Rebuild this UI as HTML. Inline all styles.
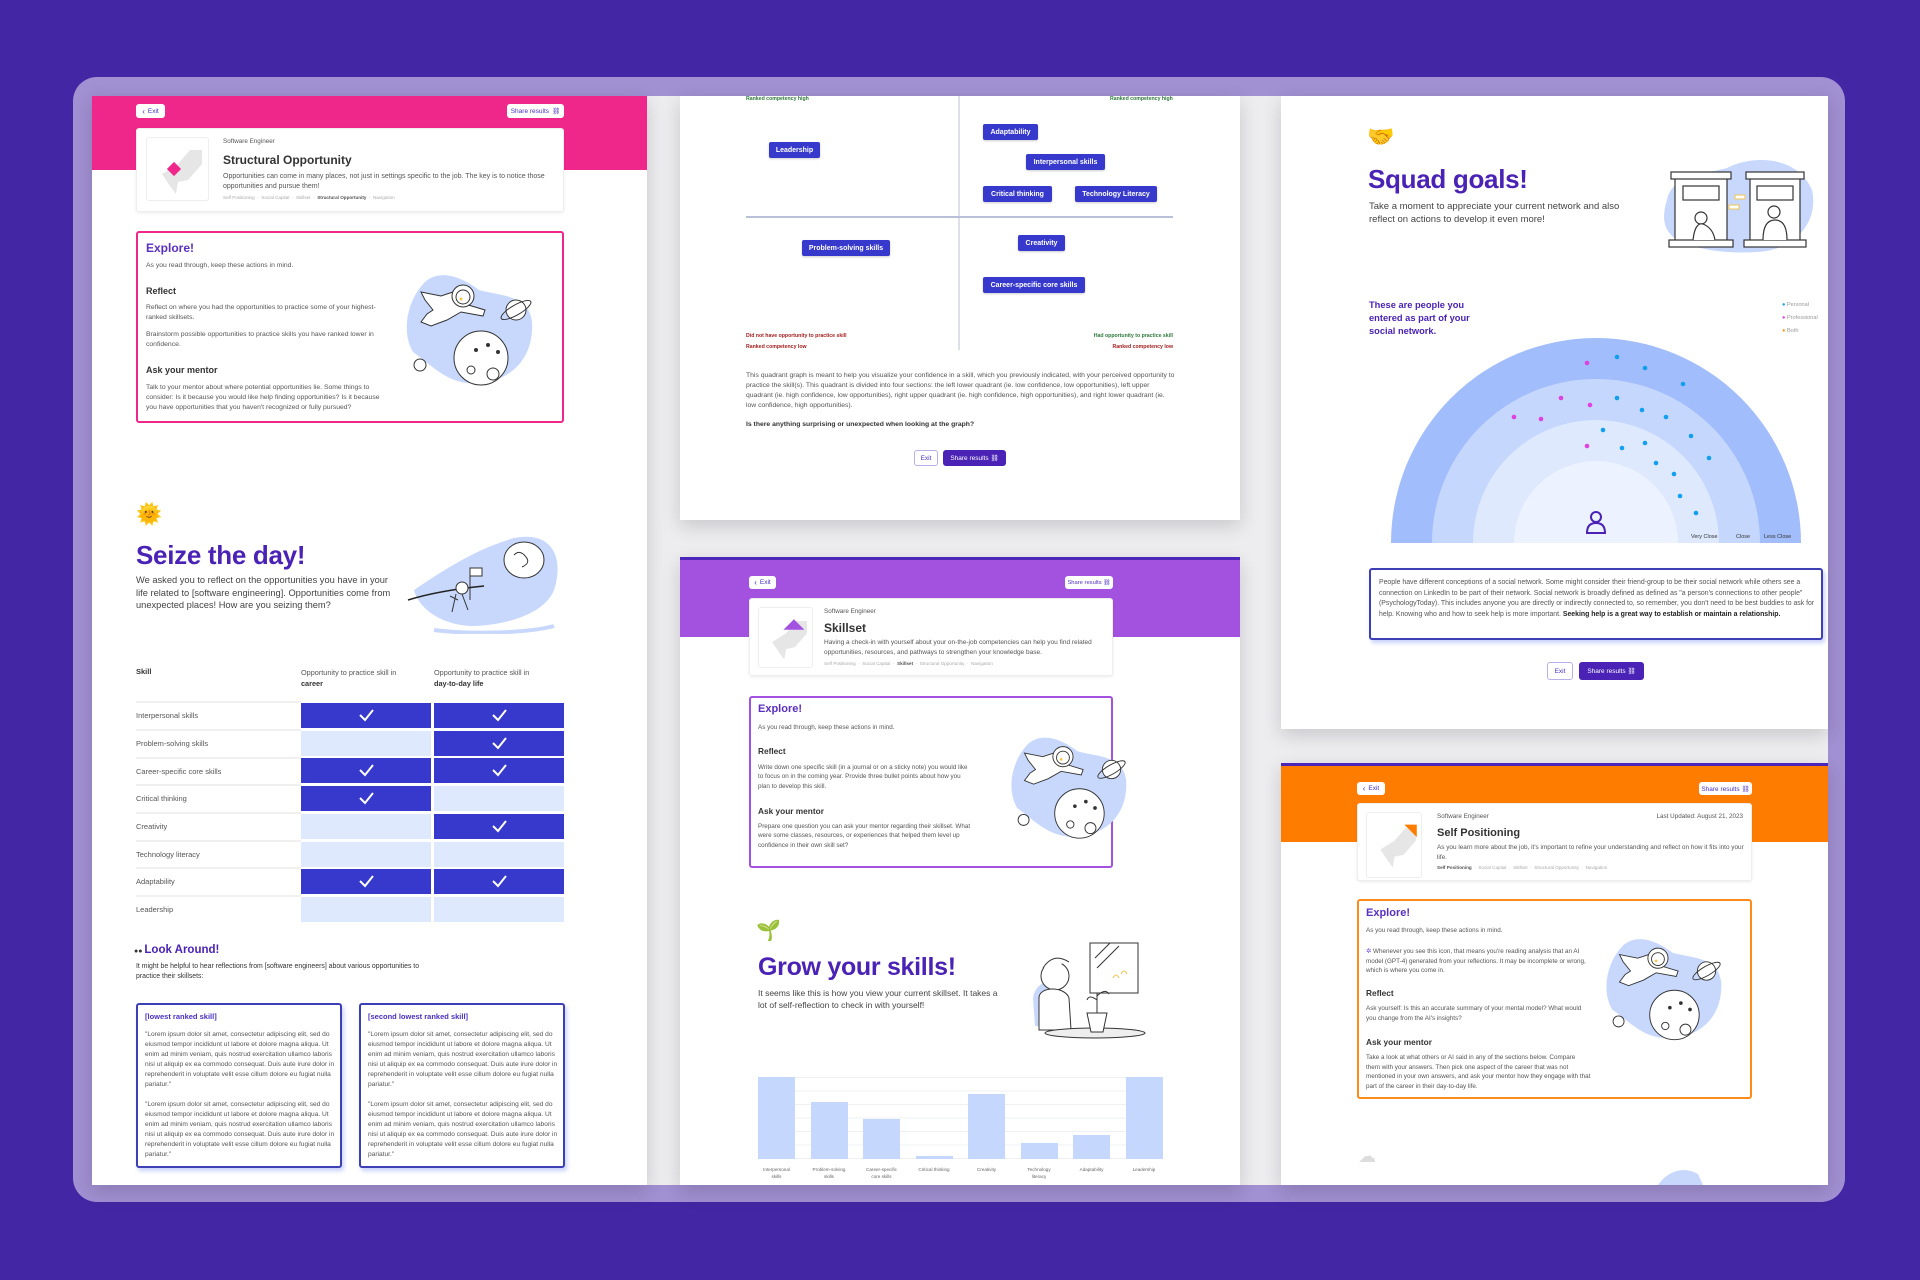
<!DOCTYPE html>
<html><head><meta charset="utf-8">
<style>
*{margin:0;padding:0;box-sizing:border-box}
body{width:1920px;height:1280px;background:#4326a3;font-family:"Liberation Sans",Arial,sans-serif;color:#3a3a3a;position:relative;overflow:hidden}
.a{position:absolute}
.panel{position:absolute;background:#fff;box-shadow:0 6px 18px rgba(0,0,0,.16);overflow:hidden}
.btn{position:absolute;background:#fff;border-radius:3px;color:#4a2fc0;font-size:6.5px;display:flex;align-items:center;justify-content:center;gap:3px;white-space:nowrap}
.card{position:absolute;background:#fff;border-radius:3px;box-shadow:0 1px 3px rgba(0,0,0,.08);border:1px solid #eee}
.thumb{position:absolute;border:1px solid #eee;border-radius:3px;background:#fff}
.se{font-size:6.3px;color:#555}
.ttl{font-size:12px;font-weight:bold;color:#333}
.desc{font-size:7px;color:#555;line-height:9.5px}
.crumb{font-size:4.6px;color:#aaa;white-space:nowrap}
.crumb b{color:#555}
.ex{position:absolute;background:#fff;border:2px solid;border-radius:3px}
.exh{font-size:12px;font-weight:bold;color:#5a2fc2}
.sm{font-size:6.8px;color:#555;line-height:10px}
.h9{font-size:9px;font-weight:bold;color:#333}
.chip{position:absolute;background:#3639cb;color:#fff;font-size:7px;font-weight:bold;border-radius:2px;display:flex;align-items:center;justify-content:center;box-shadow:0 1px 2px rgba(0,0,0,.2)}
.big{font-size:26px;font-weight:bold;color:#4a22b5;letter-spacing:-.3px}
.lbl{font-size:7.5px;color:#555}
.cell{position:absolute;height:25px;width:130px}
.on{background:#3639cb}.off{background:#dfe9fd}
.qc{position:absolute;background:#fff;border:2px solid #3d3fb5;border-radius:3px;box-shadow:2px 3px 4px rgba(120,140,240,.4)}
.lor{font-size:6.6px;color:#555;line-height:10px}
</style></head><body>
<svg width="0" height="0" style="position:absolute">
<defs>
<g id="space">
<path d="M22,12 C38,-2 60,8 76,20 C96,26 126,24 129,52 C131,82 114,110 76,113 C46,116 30,96 10,82 C-2,62 4,30 22,12Z" fill="#c8d8fd"/>
<g fill="#fff" stroke="#333" stroke-width="1">
<path d="M18,22 L38,26 L50,22 L62,34 L82,40 L80,46 L58,42 L44,50 L28,56 L18,52 L24,44 L30,40 L22,30Z"/>
<circle cx="60" cy="26" r="11"/>
<circle cx="60" cy="27" r="7"/>
<circle cx="113" cy="40" r="10"/>
<ellipse cx="113" cy="40" rx="17" ry="5" fill="none" transform="rotate(-30 113 40)"/>
<circle cx="17" cy="95" r="6"/>
<circle cx="78" cy="88" r="27"/>
<circle cx="68" cy="100" r="4" fill="none"/>
<circle cx="90" cy="104" r="6" fill="none"/>
<circle cx="85" cy="75" r="1.5" fill="#333"/>
<circle cx="73" cy="80" r="1.5" fill="#333"/>
<circle cx="95" cy="82" r="1.5" fill="#333"/>
</g>
<circle cx="58" cy="29" r="1.5" fill="#f5c84a"/>
</g>
<g id="logo">
<path d="M12,32 L28,22 L40,8 L52,8 L52,22 L38,38 L28,40 L26,52 L20,44 Z" fill="#e6e6e6"/>
</g>
</defs>
</svg>

<div class="a" style="left:73px;top:77px;width:1772px;height:1125px;background:#a190d2;border-radius:24px"></div>
<div class="a" style="left:92px;top:96px;width:1736px;height:1089px;background:#ededf0"></div>

<!-- LEFT PANEL -->
<div class="panel" style="left:92px;top:96px;width:555px;height:1089px">
 <div class="a" style="left:0;top:0;width:555px;height:74px;background:#f0278a"></div>
</div>
<div class="btn" style="left:136px;top:104px;width:29px;height:14px"><span style="font-size:8px">‹</span> Exit</div>
<div class="btn" style="left:507px;top:104px;width:57px;height:14px">Share results <span>⛓</span></div>
<div class="card" style="left:136px;top:128px;width:428px;height:84px"></div>
<div class="thumb" style="left:146px;top:137px;width:63px;height:64px"><svg width="63" height="64" viewBox="0 0 63 64"><use href="#logo" x="3" y="4"/><rect x="22" y="26" width="10" height="10" fill="#f0278a" transform="rotate(45 27 31)"/></svg></div>
<div class="a se" style="left:223px;top:138px">Software Engineer</div>
<div class="a ttl" style="left:223px;top:153px">Structural Opportunity</div>
<div class="a desc" style="left:223px;top:172px;width:330px">Opportunities can come in many places, not just in settings specific to the job. The key is to notice those opportunities and pursue them!</div>
<div class="a crumb" style="left:223px;top:195px">Self Positioning &nbsp;·&nbsp; Social Capital &nbsp;·&nbsp; Skillset &nbsp;·&nbsp; <b>Structural Opportunity</b> &nbsp;·&nbsp; Navigation</div>

<div class="ex" style="left:136px;top:231px;width:428px;height:192px;border-color:#f0278a"></div>
<div class="a exh" style="left:146px;top:241px">Explore!</div>
<div class="a sm" style="left:146px;top:261px">As you read through, keep these actions in mind.</div>
<div class="a h9" style="left:146px;top:286px">Reflect</div>
<div class="a sm" style="left:146px;top:303px;width:240px">Reflect on where you had the opportunities to practice some of your highest-ranked skillsets.</div>
<div class="a sm" style="left:146px;top:330px;width:240px">Brainstorm possible opportunities to practice skills you have ranked lower in confidence.</div>
<div class="a h9" style="left:146px;top:365px">Ask your mentor</div>
<div class="a sm" style="left:146px;top:383px;width:240px">Talk to your mentor about where potential opportunities lie. Some things to consider: Is it because you would like help finding opportunities? Is it because you have opportunities that you haven't recognized or fully pursued?</div>
<svg class="a" style="left:403px;top:270px" width="131" height="116" viewBox="0 0 131 116"><use href="#space"/></svg>

<div class="a" style="left:136px;top:503px;font-size:21px">🌞</div>
<div class="a big" style="left:136px;top:540px">Seize the day!</div>
<div class="a" style="left:136px;top:574px;width:260px;font-size:9.3px;line-height:12.5px;color:#444">We asked you to reflect on the opportunities you have in your life related to [software engineering]. Opportunities come from unexpected places! How are you seizing them?</div>
<svg class="a" style="left:404px;top:530px" width="156" height="104" viewBox="0 0 156 104">
<path d="M10,60 C40,40 70,20 110,8 C150,0 160,30 150,60 C140,85 100,95 70,96 C40,96 15,80 10,60Z" fill="#c8d8fd"/>
<path d="M4,70 C30,62 60,58 80,56" stroke="#222" stroke-width="1.5" fill="none"/>
<ellipse cx="120" cy="30" rx="20" ry="18" fill="#fff" stroke="#333"/>
<path d="M110,25 q6,-6 12,2 q5,6 -4,10" stroke="#333" fill="none"/>
<circle cx="58" cy="58" r="6" fill="#fff" stroke="#333"/>
<path d="M52,64 l-4,18 M58,64 l6,16 M54,70 l-8,-4" stroke="#333" fill="none"/>
<path d="M66,40 l0,30" stroke="#333"/><rect x="66" y="38" width="12" height="8" fill="#fff" stroke="#333"/>
<path d="M30,100 C60,104 120,104 150,96" stroke="#c8d8fd" stroke-width="4" fill="none"/>
</svg>

<div class="a" style="left:136px;top:667px;font-size:7.5px;font-weight:bold;color:#333">Skill</div>
<div class="a" style="left:301px;top:667px;font-size:7.3px;color:#555;line-height:11px">Opportunity to practice skill in<br><b style="color:#333">career</b></div>
<div class="a" style="left:434px;top:667px;font-size:7.3px;color:#555;line-height:11px">Opportunity to practice skill in<br><b style="color:#333">day-to-day life</b></div>

<div class="a" style="left:136px;top:701px;width:165px;height:2px;background:#f0f0f0"></div>
<div class="a lbl" style="left:136px;top:711px">Interpersonal skills</div>
<div class="cell on" style="left:301px;top:703px"></div><div class="cell on" style="left:434px;top:703px"></div>
<div class="a" style="left:136px;top:729px;width:165px;height:2px;background:#f0f0f0"></div>
<div class="a lbl" style="left:136px;top:739px">Problem-solving skills</div>
<div class="cell off" style="left:301px;top:731px"></div><div class="cell on" style="left:434px;top:731px"></div>
<div class="a" style="left:136px;top:757px;width:165px;height:2px;background:#f0f0f0"></div>
<div class="a lbl" style="left:136px;top:767px">Career-specific core skills</div>
<div class="cell on" style="left:301px;top:758px"></div><div class="cell on" style="left:434px;top:758px"></div>
<div class="a" style="left:136px;top:784px;width:165px;height:2px;background:#f0f0f0"></div>
<div class="a lbl" style="left:136px;top:794px">Critical thinking</div>
<div class="cell on" style="left:301px;top:786px"></div><div class="cell off" style="left:434px;top:786px"></div>
<div class="a" style="left:136px;top:812px;width:165px;height:2px;background:#f0f0f0"></div>
<div class="a lbl" style="left:136px;top:822px">Creativity</div>
<div class="cell off" style="left:301px;top:814px"></div><div class="cell on" style="left:434px;top:814px"></div>
<div class="a" style="left:136px;top:840px;width:165px;height:2px;background:#f0f0f0"></div>
<div class="a lbl" style="left:136px;top:850px">Technology literacy</div>
<div class="cell off" style="left:301px;top:842px"></div><div class="cell off" style="left:434px;top:842px"></div>
<div class="a" style="left:136px;top:867px;width:165px;height:2px;background:#f0f0f0"></div>
<div class="a lbl" style="left:136px;top:877px">Adaptability</div>
<div class="cell on" style="left:301px;top:869px"></div><div class="cell on" style="left:434px;top:869px"></div>
<div class="a" style="left:136px;top:895px;width:165px;height:2px;background:#f0f0f0"></div>
<div class="a lbl" style="left:136px;top:905px">Leadership</div>
<div class="cell off" style="left:301px;top:897px"></div><div class="cell off" style="left:434px;top:897px"></div>
<svg class="a" style="left:301px;top:703px" width="263" height="220">
<g stroke="#fff" stroke-width="2" fill="none">
<polyline points="59,12 64,17 72,7"/><polyline points="192,12 197,17 205,7"/>
<polyline points="192,40 197,45 205,35"/>
<polyline points="59,67 64,72 72,62"/><polyline points="192,67 197,72 205,62"/>
<polyline points="59,95 64,100 72,90"/>
<polyline points="192,123 197,128 205,118"/>
<polyline points="59,178 64,183 72,173"/><polyline points="192,178 197,183 205,173"/>
</g></svg>

<div class="a" style="left:134px;top:944px;font-size:11.5px;font-weight:bold;color:#4a22b5"><span style="font-size:7px;color:#333">●● </span>Look Around!</div>
<div class="a" style="left:136px;top:962px;width:300px;font-size:6.9px;line-height:10px;color:#333">It might be helpful to hear reflections from [software engineers] about various opportunities to practice their skillsets:</div>
<div class="qc" style="left:136px;top:1003px;width:206px;height:165px"></div>
<div class="qc" style="left:359px;top:1003px;width:206px;height:165px"></div>
<div class="a" style="left:145px;top:1012px;font-size:7.5px;font-weight:bold;color:#4a2fc0">[lowest ranked skill]</div>
<div class="a" style="left:368px;top:1012px;font-size:7.5px;font-weight:bold;color:#4a2fc0">[second lowest ranked skill]</div>
<div class="a lor" style="left:145px;top:1030px;width:192px">"Lorem ipsum dolor sit amet, consectetur adipiscing elit, sed do eiusmod tempor incididunt ut labore et dolore magna aliqua. Ut enim ad minim veniam, quis nostrud exercitation ullamco laboris nisi ut aliquip ex ea commodo consequat. Duis aute irure dolor in reprehenderit in voluptate velit esse cillum dolore eu fugiat nulla pariatur."<br><br>"Lorem ipsum dolor sit amet, consectetur adipiscing elit, sed do eiusmod tempor incididunt ut labore et dolore magna aliqua. Ut enim ad minim veniam, quis nostrud exercitation ullamco laboris nisi ut aliquip ex ea commodo consequat. Duis aute irure dolor in reprehenderit in voluptate velit esse cillum dolore eu fugiat nulla pariatur."</div>
<div class="a lor" style="left:368px;top:1030px;width:192px">"Lorem ipsum dolor sit amet, consectetur adipiscing elit, sed do eiusmod tempor incididunt ut labore et dolore magna aliqua. Ut enim ad minim veniam, quis nostrud exercitation ullamco laboris nisi ut aliquip ex ea commodo consequat. Duis aute irure dolor in reprehenderit in voluptate velit esse cillum dolore eu fugiat nulla pariatur."<br><br>"Lorem ipsum dolor sit amet, consectetur adipiscing elit, sed do eiusmod tempor incididunt ut labore et dolore magna aliqua. Ut enim ad minim veniam, quis nostrud exercitation ullamco laboris nisi ut aliquip ex ea commodo consequat. Duis aute irure dolor in reprehenderit in voluptate velit esse cillum dolore eu fugiat nulla pariatur."</div>

<!-- MIDDLE TOP -->
<div class="panel" style="left:680px;top:96px;width:560px;height:424px"></div>
<div class="a" style="left:958px;top:96px;width:2px;height:254px;background:#dde0e6"></div>
<div class="a" style="left:746px;top:216px;width:427px;height:1.5px;background:#b9c0d8"></div>
<div class="a" style="left:746px;top:96px;font-size:5.2px;font-weight:bold;color:#2f7a3a">Ranked competency high</div>
<div class="a" style="left:1110px;top:96px;font-size:5.2px;font-weight:bold;color:#2f7a3a">Ranked competency high</div>
<div class="chip" style="left:769px;top:142px;width:51px;height:16px">Leadership</div>
<div class="chip" style="left:983px;top:124px;width:55px;height:16px">Adaptability</div>
<div class="chip" style="left:1026px;top:154px;width:79px;height:16px">Interpersonal skills</div>
<div class="chip" style="left:983px;top:186px;width:69px;height:16px">Critical thinking</div>
<div class="chip" style="left:1075px;top:186px;width:82px;height:16px">Technology Literacy</div>
<div class="chip" style="left:802px;top:240px;width:88px;height:16px">Problem-solving skills</div>
<div class="chip" style="left:1018px;top:235px;width:47px;height:16px">Creativity</div>
<div class="chip" style="left:983px;top:277px;width:102px;height:16px">Career-specific core skills</div>
<div class="a" style="left:746px;top:333px;font-size:5.2px;font-weight:bold;color:#a32020">Did not have opportunity to practice skill</div>
<div class="a" style="left:746px;top:344px;font-size:5.2px;font-weight:bold;color:#a32020">Ranked competency low</div>
<div class="a" style="left:1070px;top:333px;width:103px;text-align:right;font-size:5.2px;font-weight:bold;color:#2f7a3a">Had opportunity to practice skill</div>
<div class="a" style="left:1070px;top:344px;width:103px;text-align:right;font-size:5.2px;font-weight:bold;color:#a32020">Ranked competency low</div>
<div class="a" style="left:746px;top:371px;width:430px;font-size:6.8px;line-height:10px;color:#555">This quadrant graph is meant to help you visualize your confidence in a skill, which you previously indicated, with your perceived opportunity to practice the skill(s). This quadrant is divided into four sections: the left lower quadrant (ie. low confidence, low opportunities), left upper quadrant (ie. high confidence, low opportunities), right upper quadrant (ie. high confidence, high opportunities), and right lower quadrant (ie. low confidence, high opportunities).</div>
<div class="a" style="left:746px;top:421px;font-size:6.8px;font-weight:bold;color:#333">Is there anything surprising or unexpected when looking at the graph?</div>
<div class="btn" style="left:914px;top:450px;width:24px;height:16px;border:1px solid #b8b0e8">Exit</div>
<div class="btn" style="left:943px;top:450px;width:63px;height:16px;background:#4a22b5;color:#fff">Share results ⛓</div>

<!-- MIDDLE BOTTOM -->
<div class="panel" style="left:680px;top:557px;width:560px;height:628px">
 <div class="a" style="left:0;top:0;width:560px;height:80px;background:#a352e0;border-top:3px solid #4b26b8"></div>
</div>
<div class="btn" style="left:749px;top:576px;width:27px;height:13px"><span style="font-size:8px">‹</span> Exit</div>
<div class="btn" style="left:1065px;top:576px;width:48px;height:13px;font-size:5.8px">Share results ⛓</div>
<div class="card" style="left:749px;top:598px;width:364px;height:78px"></div>
<div class="thumb" style="left:758px;top:607px;width:55px;height:61px"><svg width="55" height="61" viewBox="0 0 63 64"><use href="#logo" x="3" y="4"/><path d="M28,22 L40,10 L52,22Z" fill="#a352e0"/></svg></div>
<div class="a se" style="left:824px;top:608px">Software Engineer</div>
<div class="a ttl" style="left:824px;top:621px">Skillset</div>
<div class="a desc" style="left:824px;top:638px;width:285px;font-size:6.5px">Having a check-in with yourself about your on-the-job competencies can help you find related opportunities, resources, and pathways to strengthen your knowledge base.</div>
<div class="a crumb" style="left:824px;top:661px">Self Positioning &nbsp;·&nbsp; Social Capital &nbsp;·&nbsp; <b>Skillset</b> &nbsp;·&nbsp; Structural Opportunity &nbsp;·&nbsp; Navigation</div>
<div class="ex" style="left:749px;top:696px;width:364px;height:172px;border-color:#a352e0"></div>
<div class="a exh" style="left:758px;top:703px;font-size:11px">Explore!</div>
<div class="a sm" style="left:758px;top:723px;font-size:6.3px">As you read through, keep these actions in mind.</div>
<div class="a h9" style="left:758px;top:746px;font-size:8.3px">Reflect</div>
<div class="a sm" style="left:758px;top:763px;width:215px;font-size:6.3px;line-height:9.3px">Write down one specific skill (in a journal or on a sticky note) you would like to focus on in the coming year. Provide three bullet points about how you plan to develop this skill.</div>
<div class="a h9" style="left:758px;top:806px;font-size:8.3px">Ask your mentor</div>
<div class="a sm" style="left:758px;top:822px;width:215px;font-size:6.3px;line-height:9.3px">Prepare one question you can ask your mentor regarding their skillset. What were some classes, resources, or experiences that helped them level up confidence in their own skill set?</div>
<svg class="a" style="left:1008px;top:732px" width="120" height="108" viewBox="0 0 131 116"><use href="#space"/></svg>

<div class="a" style="left:756px;top:918px;font-size:20px">🌱</div>
<div class="a big" style="left:758px;top:953px;font-size:25px">Grow your skills!</div>
<div class="a" style="left:758px;top:987px;width:240px;font-size:8.5px;line-height:12px;color:#444">It seems like this is how you view your current skillset. It takes a lot of self-reflection to check in with yourself!</div>
<svg class="a" style="left:1025px;top:938px" width="125" height="106" viewBox="0 0 125 106">
<path d="M8,60 C10,45 25,40 35,42 L40,90 L10,88Z" fill="#c8d8fd"/>
<rect x="65" y="5" width="48" height="50" fill="none" stroke="#333"/>
<path d="M70,20 l15,-15 M72,30 l22,-22" stroke="#333"/>
<path d="M88,40 q3,-6 6,0 M96,36 q3,-6 6,0" stroke="#f1c34f" fill="none"/>
<circle cx="30" cy="38" r="14" fill="#fff" stroke="#333"/>
<path d="M18,30 q10,-16 26,-6" stroke="#333" fill="#fff"/>
<path d="M14,60 C14,48 40,48 44,60 L46,92 L14,92Z" fill="#fff" stroke="#333"/>
<ellipse cx="70" cy="95" rx="50" ry="5" fill="#eee" stroke="#333"/>
<path d="M62,75 L82,75 L78,94 L66,94Z" fill="#fff" stroke="#333"/>
<path d="M72,75 L72,55 M72,62 q-8,-6 -10,0 M72,58 q8,-8 12,-2" stroke="#333" fill="none"/>
</svg>
<div class="a" style="left:758px;top:1077px;width:404px;height:82px;background:repeating-linear-gradient(to bottom,#eef0f4 0,#eef0f4 1px,transparent 1px,transparent 13.5px)"></div>
<div class="a" style="left:758px;top:1077px;width:37px;height:82px;background:#c6d7fe"></div>
<div class="a" style="left:811px;top:1102px;width:37px;height:57px;background:#c6d7fe"></div>
<div class="a" style="left:863px;top:1119px;width:37px;height:40px;background:#c6d7fe"></div>
<div class="a" style="left:916px;top:1156px;width:37px;height:3px;background:#c6d7fe"></div>
<div class="a" style="left:968px;top:1094px;width:37px;height:65px;background:#c6d7fe"></div>
<div class="a" style="left:1021px;top:1143px;width:37px;height:16px;background:#c6d7fe"></div>
<div class="a" style="left:1073px;top:1135px;width:37px;height:24px;background:#c6d7fe"></div>
<div class="a" style="left:1126px;top:1077px;width:37px;height:82px;background:#c6d7fe"></div>
<div class="a" style="left:750px;top:1166px;width:420px;font-size:4.6px;color:#666;line-height:7px;display:flex">
<div style="width:53px;text-align:center">Interpersonal<br>skills</div><div style="width:52px;text-align:center">Problem-solving<br>skills</div><div style="width:53px;text-align:center">Career-specific<br>core skills</div><div style="width:52px;text-align:center">Critical thinking</div><div style="width:53px;text-align:center">Creativity</div><div style="width:52px;text-align:center">Technology<br>literacy</div><div style="width:53px;text-align:center">Adaptability</div><div style="width:52px;text-align:center">Leadership</div></div>

<!-- RIGHT TOP -->
<div class="panel" style="left:1281px;top:96px;width:547px;height:633px"></div>
<div class="a" style="left:1367px;top:124px;font-size:22px">🤝</div>
<div class="a big" style="left:1368px;top:164px;font-size:26px">Squad goals!</div>
<div class="a" style="left:1369px;top:200px;width:270px;font-size:9.5px;line-height:13px;color:#444">Take a moment to appreciate your current network and also reflect on actions to develop it even more!</div>
<svg class="a" style="left:1657px;top:150px" width="160" height="106" viewBox="0 0 160 106">
<path d="M10,50 C15,25 45,25 70,18 C95,5 140,5 155,40 C162,70 140,100 100,102 C70,104 40,100 20,90 C5,80 5,65 10,50Z" fill="#c8d8fd"/>
<g fill="#fff" stroke="#333" stroke-width="1.2">
<rect x="18" y="28" width="52" height="68"/><rect x="14" y="22" width="60" height="7"/>
<rect x="26" y="36" width="36" height="14"/><rect x="12" y="90" width="64" height="7"/>
<rect x="93" y="28" width="50" height="68"/><rect x="89" y="22" width="58" height="7"/>
<rect x="100" y="36" width="36" height="14"/><rect x="87" y="90" width="62" height="7"/>
<circle cx="44" cy="68" r="6"/><path d="M36,90 q2,-18 10,-16 q10,4 12,16"/>
<circle cx="117" cy="62" r="6"/><path d="M106,90 q0,-20 12,-20 q12,0 12,20"/>
</g>
<rect x="78" y="45" width="10" height="4" fill="#fff" stroke="#f1c34f"/><rect x="72" y="55" width="10" height="4" fill="#fff" stroke="#f1c34f"/>
</svg>
<div class="a" style="left:1369px;top:299px;width:120px;font-size:9.3px;line-height:13px;font-weight:bold;color:#4a22b5">These are people you entered as part of your social network.</div>
<div class="a" style="left:1782px;top:299px;font-size:5.6px;color:#999;line-height:13px"><span style="color:#10a0ee">●</span> Personal<br><span style="color:#e040e0">●</span> Professional<br><span style="color:#f59a1a">●</span> Both</div>
<svg class="a" style="left:1391px;top:338px" width="410" height="206" viewBox="0 0 410 206">
<path d="M0,205 A205,205 0 0 1 410,205Z" fill="#a2bdfb"/>
<path d="M41,205 A164,164 0 0 1 369,205Z" fill="#c6d7fd"/>
<path d="M82,205 A123,123 0 0 1 328,205Z" fill="#dee9fe"/>
<path d="M123,205 A82,82 0 0 1 287,205Z" fill="#ecf2ff"/>
<g fill="#e040e0"><circle cx="196" cy="25" r="2.3"/><circle cx="170" cy="60" r="2.3"/><circle cx="199" cy="67" r="2.3"/><circle cx="123" cy="79" r="2.3"/><circle cx="150" cy="81" r="2.3"/><circle cx="196" cy="108" r="2.3"/></g>
<g fill="#10a0ee"><circle cx="226" cy="19" r="2.3"/><circle cx="254" cy="30" r="2.3"/><circle cx="292" cy="46" r="2.3"/><circle cx="226" cy="60" r="2.3"/><circle cx="251" cy="72" r="2.3"/><circle cx="275" cy="79" r="2.3"/><circle cx="212" cy="92" r="2.3"/><circle cx="300" cy="98" r="2.3"/><circle cx="254" cy="105" r="2.3"/><circle cx="231" cy="110" r="2.3"/><circle cx="318" cy="120" r="2.3"/><circle cx="265" cy="125" r="2.3"/><circle cx="283" cy="136" r="2.3"/><circle cx="289" cy="158" r="2.3"/><circle cx="305" cy="175" r="2.3"/></g>
<g stroke="#4a22b5" stroke-width="2" fill="none"><circle cx="205" cy="179" r="5"/><path d="M196,195 q0,-10 9,-10 q9,0 9,10Z"/></g>
<g font-size="5.5" fill="#333" font-family="Liberation Sans"><text x="300" y="200">Very Close</text><text x="345" y="200">Close</text><text x="373" y="200">Less Close</text></g>
</svg>
<div class="qc" style="left:1369px;top:568px;width:454px;height:72px"></div>
<div class="a" style="left:1379px;top:578px;width:436px;font-size:6.9px;line-height:10.5px;color:#555">People have different conceptions of a social network. Some might consider their friend-group to be their social network while others see a connection on LinkedIn to be part of their network. Social network is broadly defined as defined as "a person's connections to other people" (PsychologyToday). This includes anyone you are directly or indirectly connected to, so remember, you don't need to be best buddies to ask for help. Knowing who and how to seek help is more important. <b style="color:#222">Seeking help is a great way to establish or maintain a relationship.</b></div>
<div class="btn" style="left:1547px;top:662px;width:26px;height:18px;border:1px solid #b8b0e8">Exit</div>
<div class="btn" style="left:1579px;top:662px;width:65px;height:18px;background:#4a22b5;color:#fff">Share results ⛓</div>

<!-- RIGHT BOTTOM -->
<div class="panel" style="left:1281px;top:763px;width:547px;height:422px">
 <div class="a" style="left:0;top:0;width:547px;height:79px;background:#fe7d00;border-top:3px solid #4b26b8"></div>
</div>
<div class="btn" style="left:1357px;top:782px;width:28px;height:13px"><span style="font-size:8px">‹</span> Exit</div>
<div class="btn" style="left:1699px;top:782px;width:53px;height:13px">Share results ⛓</div>
<div class="card" style="left:1357px;top:803px;width:395px;height:78px"></div>
<div class="thumb" style="left:1366px;top:812px;width:56px;height:66px"><svg width="56" height="66" viewBox="0 0 63 64"><use href="#logo" x="3" y="4"/><path d="M42,8 L56,8 L56,22Z" fill="#fe7d00"/></svg></div>
<div class="a se" style="left:1437px;top:813px">Software Engineer</div>
<div class="a se" style="left:1640px;top:813px;width:103px;text-align:right">Last Updated: August 21, 2023</div>
<div class="a ttl" style="left:1437px;top:827px;font-size:11px">Self Positioning</div>
<div class="a desc" style="left:1437px;top:843px;width:310px;font-size:6.4px">As you learn more about the job, it's important to refine your understanding and reflect on how it fits into your life.</div>
<div class="a crumb" style="left:1437px;top:865px"><b>Self Positioning</b> &nbsp;·&nbsp; Social Capital &nbsp;·&nbsp; Skillset &nbsp;·&nbsp; Structural Opportunity &nbsp;·&nbsp; Navigation</div>
<div class="ex" style="left:1357px;top:899px;width:395px;height:200px;border-color:#fe8a1a"></div>
<div class="a exh" style="left:1366px;top:907px;font-size:11px">Explore!</div>
<div class="a sm" style="left:1366px;top:926px;font-size:6.3px">As you read through, keep these actions in mind.</div>
<div class="a sm" style="left:1366px;top:947px;width:225px;font-size:6.3px;line-height:9.5px"><span style="color:#6a4ae0">✲</span> Whenever you see this icon, that means you're reading analysis that an AI model (GPT-4) generated from your reflections. It may be incomplete or wrong, which is where you come in.</div>
<div class="a h9" style="left:1366px;top:988px;font-size:8.3px">Reflect</div>
<div class="a sm" style="left:1366px;top:1004px;width:225px;font-size:6.3px;line-height:9.5px">Ask yourself: Is this an accurate summary of your mental model? What would you change from the AI's insights?</div>
<div class="a h9" style="left:1366px;top:1037px;font-size:8.3px">Ask your mentor</div>
<div class="a sm" style="left:1366px;top:1053px;width:225px;font-size:6.3px;line-height:9.5px">Take a look at what others or AI said in any of the sections below. Compare them with your answers. Then pick one aspect of the career that was not mentioned in your own answers, and ask your mentor how they engage with that part of the career in their day-to-day life.</div>
<svg class="a" style="left:1603px;top:934px" width="120" height="107" viewBox="0 0 131 116"><use href="#space"/></svg>
<div class="a" style="left:1358px;top:1146px;font-size:18px;color:#ddd">☁</div>
<svg class="a" style="left:1658px;top:1166px" width="50" height="19"><path d="M0,19 C10,5 25,0 40,8 L45,19Z" fill="#c8d8fd"/></svg>
</body></html>
